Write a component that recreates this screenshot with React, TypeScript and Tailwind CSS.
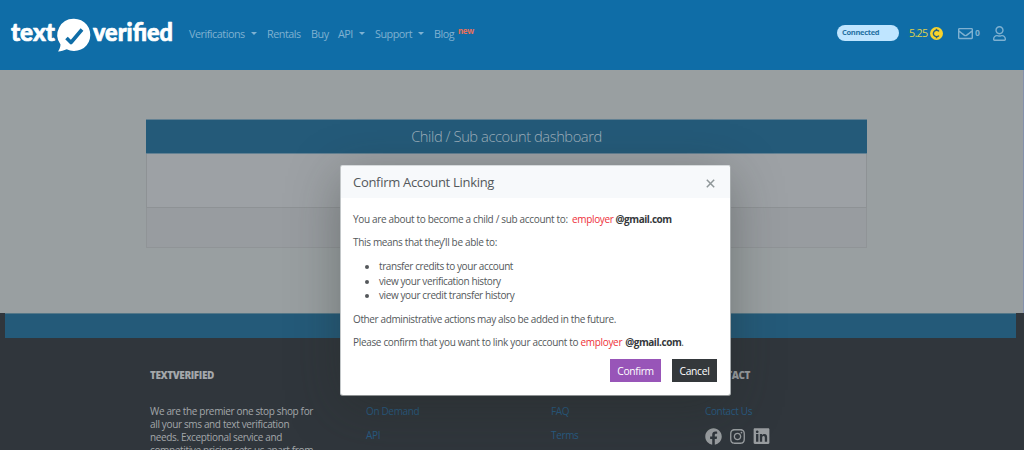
import React from "react";
import { FaFacebook, FaInstagram, FaLinkedin, FaRegEnvelope, FaRegUser } from "react-icons/fa";

function Logo() {
  return (
    <svg className="ml-[10px] h-[36px] w-[165px] shrink-0 overflow-visible" viewBox="0 0 165 36" fill="#fff">
      <g stroke="#fff" strokeWidth="0.7" strokeLinejoin="round" fontFamily="'Lato', sans-serif" fontWeight="900" fontSize="25">
        <text x="1" y="23" textLength="44" lengthAdjust="spacingAndGlyphs">text</text>
        <text x="83" y="23" textLength="80" lengthAdjust="spacingAndGlyphs">verified</text>
      </g>
      <path d="M64 0.700a16.200 16.200 0 1 1-7.300 30.600C54 32.500 51 33.300 48 33.500c1.400-2 2.400-4.300 2.500-7A16.200 16.200 0 0 1 64 .7Z" />
      <path d="m56.500 20 4.500 4.500L72 11.500" fill="none" stroke="#0f6da7" strokeWidth="3.600" strokeLinejoin="round" />
    </svg>
  );
}

function Caret() {
  return <span className="ml-[6px] mb-[2px] h-0 w-0 border-x-[3px] border-t-[3px] border-x-transparent border-t-current" />;
}

function NavLink({ label, caret = false, className }: { label: string; caret?: boolean; className: string }) {
  return (
    <a className={`flex shrink-0 items-center whitespace-nowrap ${className}`}>
      <span>{label}</span>
      {caret && <Caret />}
    </a>
  );
}

function Header() {
  return (
    <header className="flex h-[70px] items-start bg-[#0f6da7] pt-[18px] text-[#7fb1d1]">
      <Logo />
      <nav className="ml-[14px] mt-[8px] flex h-4 items-center text-[10.800px] tracking-[-0.480px]">
        <NavLink label="Verifications" caret className="w-[78px]" />
        <NavLink label="Rentals" className="w-[44px]" />
        <NavLink label="Buy" className="w-[27px]" />
        <NavLink label="API" caret className="w-[37px]" />
        <NavLink label="Support" caret className="w-[59px]" />
        <NavLink label="Blog" className="w-[24px]" />
        <span className="mb-[6px] text-[8px] font-bold leading-none tracking-[-0.400px] text-[#e8705a]">new</span>
      </nav>
      <div className="ml-auto mt-[7px] flex h-4 items-center">
        <span className="flex h-4 w-[62px] items-center rounded-full bg-[#bfe5ff] pl-[5px] text-[7.500px] font-bold tracking-[-0.300px] text-[#2672a3]">
          Connected
        </span>
        <span className="ml-[10px] w-[21px] text-[10.800px] tracking-[-0.700px] text-[#ddd04e]">5.25</span>
        <svg className="h-[13px] w-[13px]" viewBox="0 0 13 13">
          <circle cx="6.500" cy="6.500" r="6.500" fill="#f8d32c" />
          <path d="M9 4.400a3.200 3.200 0 1 0 0 4.200M6.500 1.800v2M6.500 9.200v2" fill="none" stroke="#28617f" strokeWidth="1.400" />
        </svg>
        <FaRegEnvelope className="ml-[15px] h-[15px] w-[15px]" />
        <span className="ml-[2px] w-[6px] text-[8.500px] font-bold">0</span>
        <FaRegUser className="ml-[12px] mr-[18px] h-[15px] w-[13px]" />
      </div>
    </header>
  );
}

function Dashboard() {
  return (
    <main className="h-[243px] border-r border-[#8490ab] bg-[#999fa1] pl-[146px] pt-[49px]">
      <section className="flex h-[129px] w-[721px] flex-col border-b border-[#909497]">
        <h1 className="flex h-[35px] items-center justify-center border-b border-t border-[#638193] bg-[#245a79] text-[14.700px] font-light tracking-[-0.430px] text-[#9fb0bc]">
          Child / Sub account dashboard
        </h1>
        <div className="h-[54px] border-x border-b border-[#8e9295] bg-[#9da1a5]" />
        <div className="flex-1 border-x border-[#909497] bg-[#989ca0]" />
      </section>
    </main>
  );
}

function FooterColumn({ title, links, className, children }: { title?: string; links: string[]; className?: string; children?: React.ReactNode }) {
  return (
    <div className={className}>
      <h2 className="h-[37px] font-extrabold leading-[14px] tracking-[-0.480px] text-[#9a9ea1]">{title}</h2>
      {links.map((link) => (
        <a key={link} className="block h-6 leading-[13px] text-[#285b82]">{link}</a>
      ))}
      {children}
    </div>
  );
}

function Footer() {
  return (
    <footer className="h-[137px] overflow-hidden bg-[#30363c] text-[10px] tracking-[-0.350px]">
      <div className="ml-[5px] mr-[8px] h-[25px] border-t border-[#547788] bg-[#245a79]" />
      <div className="flex pl-[150px] pt-[30px] text-[#a3a7aa]">
        <div className="w-[216px]">
          <h2 className="h-[37px] font-extrabold leading-[14px] tracking-[-0.420px]">TEXTVERIFIED</h2>
          <p className="whitespace-nowrap leading-[13px]">
            We are the premier one stop shop for<br />all your sms and text verification<br />needs. Exceptional service and<br />competitive pricing sets us apart from
          </p>
        </div>
        <FooterColumn links={["On Demand", "API"]} className="w-[185px]" />
        <FooterColumn links={["FAQ", "Terms"]} className="w-[154px]" />
        <FooterColumn title="CONTACT" links={["Contact Us"]}>
          <div className="-mt-[2px] flex h-[18px] items-center gap-[7px] text-[#999da0]">
            <FaFacebook className="h-[17px] w-[17px]" />
            <FaInstagram className="h-[17px] w-[17px]" />
            <FaLinkedin className="h-[18px] w-[17px]" />
          </div>
        </FooterColumn>
      </div>
    </footer>
  );
}

function Account({ className = "" }: { className?: string }) {
  return (
    <>
      <span className={`text-[#ee2f38] ${className}`}>employer</span>
      <b className="tracking-[-0.450px] text-[#35383b]">@gmail.com</b>
    </>
  );
}

function LinkDialog() {
  return (
    <div role="dialog" className="absolute left-[340px] top-[165px] h-[231px] w-[391px] overflow-hidden rounded-[3px] border border-b-[#8d9192] border-l-[#c3c7c9] border-r-[#a5aaac] border-t-[#d6dadc] bg-white text-[10px] tracking-[-0.330px] text-[#54585b]">
      <div className="flex h-[32px] items-center justify-between bg-[#f7f9fb] pl-3 pr-[15px] pt-[3px]">
        <h2 className="-mt-[2px] text-[13px] tracking-[-0.300px]">Confirm Account Linking</h2>
        <svg className="h-[9px] w-[9px]" viewBox="0 0 9 9" fill="none" stroke="#8f9799" strokeWidth="1.500">
          <path d="m.8.8 7.400 7.400M8.200.8.8 8.200" />
        </svg>
      </div>
      <div className="whitespace-nowrap pl-3 pr-[13px] pt-[14px] leading-[14.400px]">
        <p>You are about to become a child / sub account to: <Account className="mx-[2px]" /></p>
        <p className="mt-[9px]">This means that they’ll be able to:</p>
        <ul className="mt-[9.500px] list-disc pl-[26px] tracking-[-0.400px]">
          <li>transfer credits to your account</li>
          <li>view your verification history</li>
          <li>view your credit transfer history</li>
        </ul>
        <p className="mt-[9.500px] tracking-[-0.380px]">Other administrative actions may also be added in the future.</p>
        <p className="mt-[9px]">Please confirm that you want to link your account to <Account className="mr-[3px]" />.</p>
        <div className="mt-[9px] flex justify-end gap-[11px] text-white">
          <button className="h-[23px] w-[51px] bg-[#9855b8] pt-px text-[10.300px]">Confirm</button>
          <button className="h-[23px] w-[45px] bg-[#34383b] pt-px text-[10.300px]">Cancel</button>
        </div>
      </div>
    </div>
  );
}

export default function App() {
  return (
    <div className="relative h-[450px] w-[1024px] overflow-hidden font-['Open_Sans','Noto_Sans',sans-serif]">
      <Header />
      <Dashboard />
      <Footer />
      <div className="pointer-events-none absolute inset-x-0 bottom-0 top-[70px] overflow-hidden">
        <div className="absolute left-[340px] top-[95px] h-[231px] w-[390px] shadow-[0_11px_48px_rgba(35,40,35,0.35)]" />
      </div>
      <LinkDialog />
    </div>
  );
}
